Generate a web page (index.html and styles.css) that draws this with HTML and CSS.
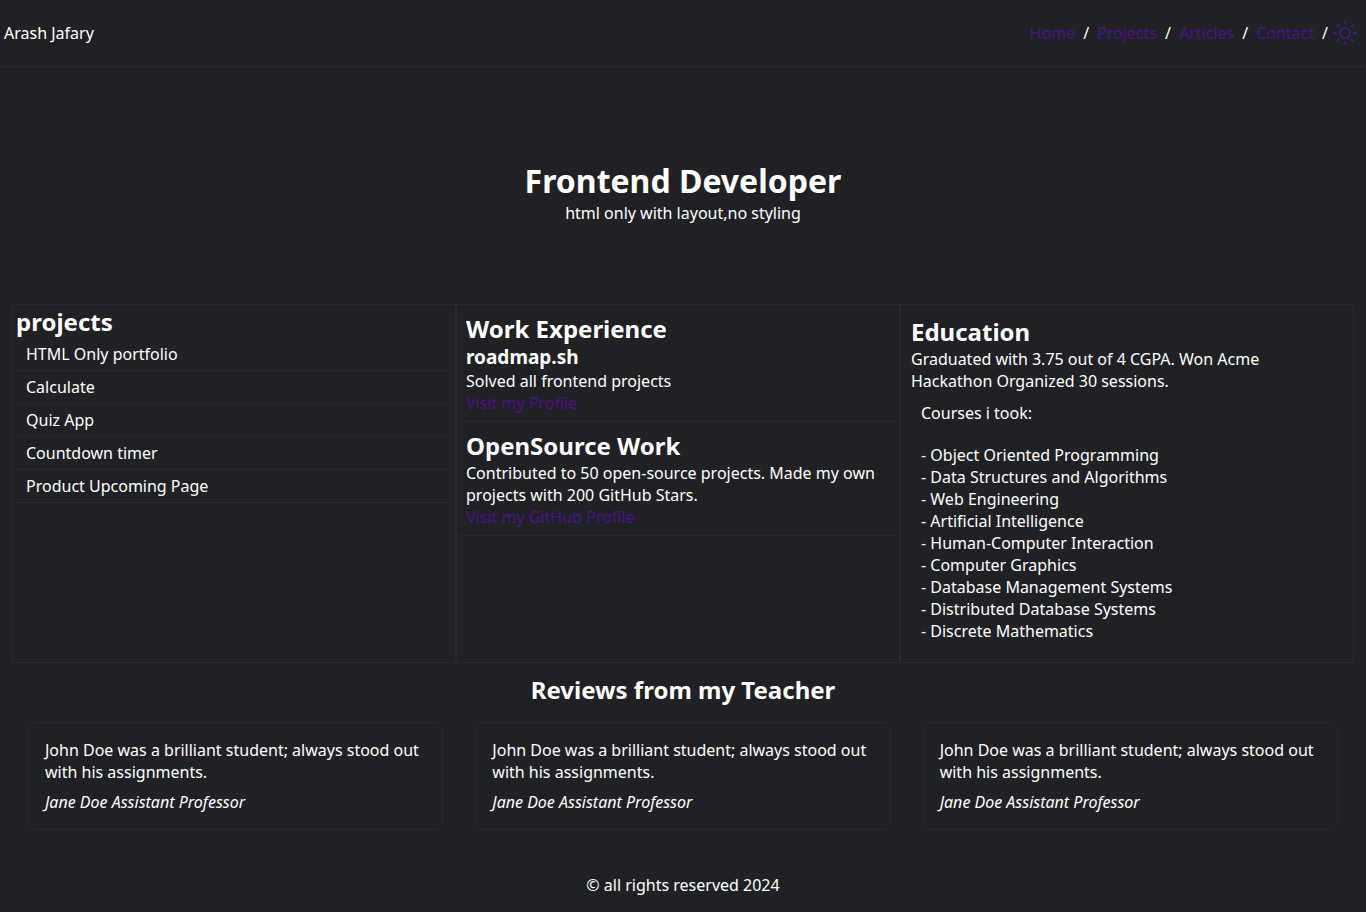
FILE: index.html
```html
<!DOCTYPE html>
<html lang="en">
<head>
  <meta charset="utf-8">
  <meta name="viewport" content="width=device-width, initial-scale=1">
  <title>Arash Jafary</title>
  <link rel="stylesheet" href="styles.css">
</head>
<body>
  <header class="site-header">
    <p>Arash Jafary</p>
    <nav class="nav" aria-label="Main">
      <a href="#home">Home</a>
      <span>/</span>
      <a href="#projects">Projects</a>
      <span>/</span>
      <a href="#articles">Articles</a>
      <span>/</span>
      <a href="#contact">Contact</a>
      <span>/</span>
      <button class="theme-toggle" type="button" aria-label="Toggle theme">
        <svg width="24" height="24" viewBox="0 0 24 24" fill="none" stroke="currentColor" stroke-width="1.8" aria-hidden="true">
          <circle cx="12" cy="12" r="5.1"/>
          <path d="M12 0v3.75M12 20.25V24M0 12h3.75M20.25 12H24M3.7 3.7l2.4 2.4M17.9 17.9l2.4 2.4M3.7 20.3l2.4-2.4M17.9 6.1l2.4-2.4"/>
        </svg>
      </button>
    </nav>
  </header>

  <main>
    <section class="hero" id="home">
      <h1>Frontend Developer</h1>
      <p>html only with layout,no styling</p>
    </section>

    <div class="columns">
      <section class="column" id="projects">
        <h2>projects</h2>
        <ul class="project-list">
          <li>HTML Only portfolio</li>
          <li>Calculate</li>
          <li>Quiz App</li>
          <li>Countdown timer</li>
          <li>Product Upcoming Page</li>
        </ul>
      </section>

      <section class="column">
        <article class="work">
          <h2>Work Experience</h2>
          <h3>roadmap.sh</h3>
          <p>Solved all frontend projects</p>
          <a href="#profile">Visit my Profile</a>
        </article>
        <article class="work">
          <h2>OpenSource Work</h2>
          <p>Contributed to 50 open-source projects. Made my own projects with 200 GitHub Stars.</p>
          <a href="#github">Visit my GitHub Profile</a>
        </article>
      </section>

      <section class="column education">
        <h2>Education</h2>
        <p>Graduated with 3.75 out of 4 CGPA. Won Acme Hackathon Organized 30 sessions.</p>
        <div class="courses">
          <p>Courses i took:</p>
          <ul class="course-list">
            <li>- Object Oriented Programming</li>
            <li>- Data Structures and Algorithms</li>
            <li>- Web Engineering</li>
            <li>- Artificial Intelligence</li>
            <li>- Human-Computer Interaction</li>
            <li>- Computer Graphics</li>
            <li>- Database Management Systems</li>
            <li>- Distributed Database Systems</li>
            <li>- Discrete Mathematics</li>
          </ul>
        </div>
      </section>
    </div>

    <section class="reviews">
      <h2>Reviews from my Teacher</h2>
      <div class="review-grid">
        <article class="review">
          <p>John Doe was a brilliant student; always stood out with his assignments.</p>
          <cite>Jane Doe Assistant Professor</cite>
        </article>
        <article class="review">
          <p>John Doe was a brilliant student; always stood out with his assignments.</p>
          <cite>Jane Doe Assistant Professor</cite>
        </article>
        <article class="review">
          <p>John Doe was a brilliant student; always stood out with his assignments.</p>
          <cite>Jane Doe Assistant Professor</cite>
        </article>
      </div>
    </section>
  </main>

  <footer class="site-footer">
    <p>© all rights reserved 2024</p>
  </footer>
</body>
</html>
```
FILE: styles.css
```css
:root {
  --bg: #202124;
  --line: #2a2a2a;
  --text: #ffffff;
  --link: #4b1489;
}

* {
  margin: 0;
  padding: 0;
  box-sizing: border-box;
}

body {
  background: var(--bg);
  color: var(--text);
  font-family: "Noto Sans", sans-serif;
  font-size: 16px;
  line-height: 22px;
}

ul {
  list-style: none;
}

a {
  color: var(--link);
  text-decoration: none;
}

h1 {
  font-size: 32px;
  line-height: 43px;
}

h2 {
  font-size: 24px;
  line-height: 33px;
}

h3 {
  font-size: 19px;
  line-height: 25px;
}

.site-header {
  display: flex;
  align-items: center;
  justify-content: space-between;
  padding: 21px 9px 21px 4px;
  border-bottom: 1px solid var(--line);
}

.nav {
  display: flex;
  align-items: center;
  gap: 8px;
}

.theme-toggle {
  display: flex;
  margin-left: -3px;
  border: 0;
  background: none;
  color: var(--link);
  cursor: pointer;
}

.hero {
  padding: 92px 16px 80px;
  text-align: center;
}

.columns {
  display: flex;
  margin: 0 12px;
}

.column {
  flex: 1 1 0;
  padding: 0 3px;
  border: 1px solid var(--line);
}

.project-list li {
  padding: 5px 10px;
  border-bottom: 1px solid var(--line);
}

.work {
  padding: 7px 6px;
  border-bottom: 1px solid var(--line);
}

.work a {
  display: block;
}

.education {
  padding: 10px 8px;
}

.education > * {
  padding: 0 2px;
}

.education .courses {
  padding: 10px 12px;
}

.course-list {
  margin-top: 20px;
}

.reviews {
  padding: 10px 28px 0;
}

.reviews h2 {
  margin-bottom: 16px;
  text-align: center;
}

.review-grid {
  display: grid;
  grid-template-columns: repeat(3, 1fr);
  gap: 32px;
}

.review {
  padding: 16px;
  border: 1px solid var(--line);
  border-radius: 8px;
}

.review cite {
  display: block;
  margin-top: 8px;
}

.site-footer {
  padding: 44px 16px 16px;
  text-align: center;
}
```
